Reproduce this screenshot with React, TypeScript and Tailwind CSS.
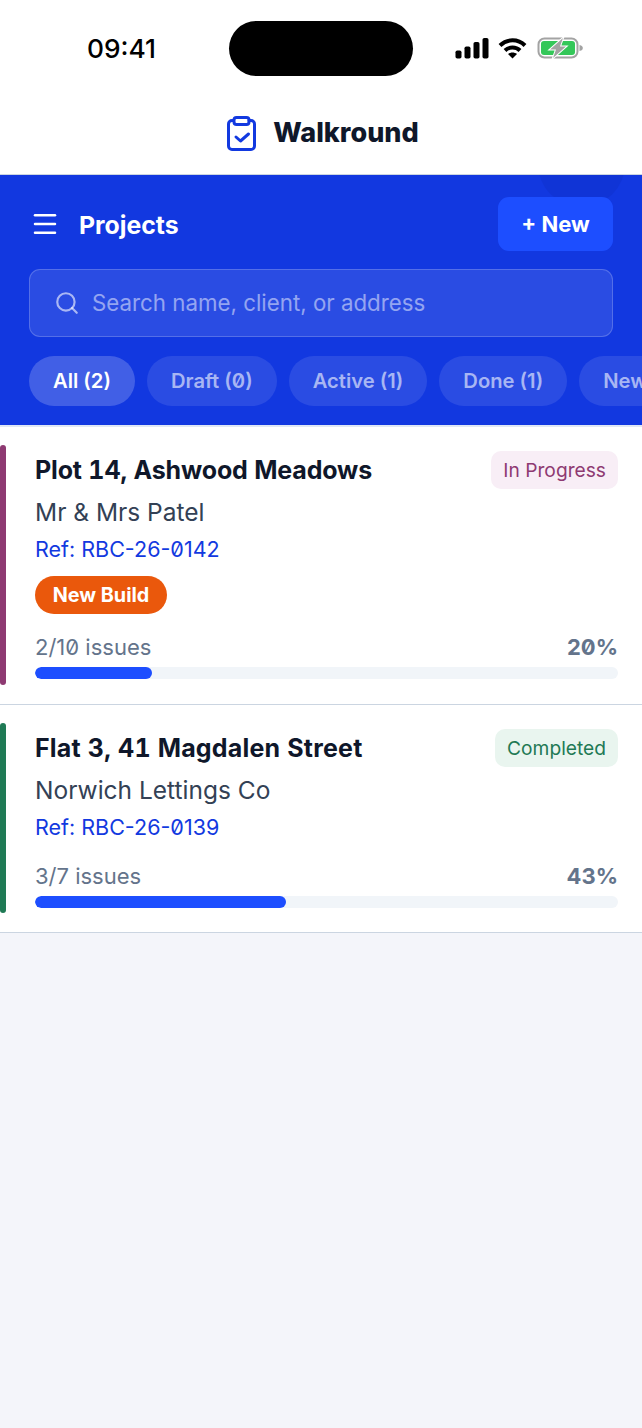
import React from 'react';
import { Search, Menu } from 'lucide-react';

const filters = [
  { label: 'All (2)', active: true },
  { label: 'Draft (0)' },
  { label: 'Active (1)' },
  { label: 'Done (1)' },
  { label: 'New Build (1)' },
];

const projects = [
  {
    name: 'Plot 14, Ashwood Meadows',
    nameClass: 'tracking-[-0.16px]',
    client: 'Mr & Mrs Patel',
    ref: 'Ref: RBC-26-0142',
    status: 'In Progress',
    statusClass: 'bg-[#f8eef6] text-[#8e3a72]',
    barClass: 'bg-[#8e3a72]',
    tag: 'New Build',
    issues: '2/10 issues',
    pct: 20,
  },
  {
    name: 'Flat 3, 41 Magdalen Street',
    nameClass: 'tracking-[0.2px]',
    client: 'Norwich Lettings Co',
    ref: 'Ref: RBC-26-0139',
    status: 'Completed',
    statusClass: 'bg-[#e9f5ef] text-[#1f7a55]',
    barClass: 'bg-[#1f7a55]',
    issues: '3/7 issues',
    pct: 43,
  },
];

function StatusBar() {
  return (
    <div className="relative h-[96px] bg-white">
      <span className="absolute left-[87px] top-[33px] text-[26.3px] leading-[32px] font-medium text-black font-['Inter']">
        09:41
      </span>
      <div className="absolute left-[229px] top-[21px] h-[55px] w-[184px] rounded-[28px] bg-black" />
      <svg className="absolute left-[455px] top-[38px]" width="34" height="21" viewBox="0 0 34 21" fill="#000">
        <rect x="0.5" y="12.5" width="6" height="8" rx="1.8" />
        <rect x="9.5" y="8.5" width="6" height="12" rx="1.8" />
        <rect x="18.5" y="4" width="6" height="16.5" rx="1.8" />
        <rect x="27.5" y="0" width="6" height="20.5" rx="1.8" />
      </svg>
      <svg className="absolute left-[498px] top-[37px]" width="29" height="22" viewBox="0 0 29 22" fill="none" stroke="#000" strokeWidth="4">
        <path d="M2 8.5 C9 1.5 20 1.5 27 8.5" />
        <path d="M7 13.5 C11 9.5 18 9.5 22 13.5" />
        <path d="M14.5 21.5 L10 17 C12.5 15 16.5 15 19 17 Z" fill="#000" stroke="none" />
      </svg>
      <svg className="absolute left-[537px] top-[37px]" width="47" height="22" viewBox="0 0 47 22" fill="none">
        <rect x="1.5" y="1.5" width="39" height="19" rx="6" stroke="#a3a3a3" strokeWidth="2" />
        <rect x="4" y="4" width="34" height="14" rx="3" fill="#34c759" />
        <path d="M42.5 8 C45 8.5 45.8 9.5 45.8 11 C45.8 12.5 45 13.5 42.5 14 Z" fill="#a3a3a3" />
        <path d="M26 1 L13 12.5 H19 L16 21 L29 9.5 H23 Z" fill="#a3a3a3" stroke="#fff" strokeWidth="2" paintOrder="stroke" />
      </svg>
    </div>
  );
}

function BrandHeader() {
  return (
    <div className="flex h-[79px] items-center justify-center gap-[17px] border-b border-[#cbd5e1] bg-white pb-[4px] pl-[4px]">
      <svg width="29" height="35" viewBox="0 0 29 35" fill="none" stroke="#1239e0" strokeWidth="3" strokeLinecap="round" strokeLinejoin="round">
        <path d="M6 4.5 H5 A3.5 3.5 0 0 0 1.5 8 V30 A3.5 3.5 0 0 0 5 33.5 H24 A3.5 3.5 0 0 0 27.5 30 V8 A3.5 3.5 0 0 0 24 4.5 H22" />
        <rect x="7" y="1.5" width="15" height="7" rx="2.5" />
        <path d="M9 21 L13.5 25 L21.5 18" />
      </svg>
      <span className="text-[27px] leading-[34px] font-extrabold text-[#0f172a] font-['Inter']">Walkround</span>
    </div>
  );
}

function ProjectsPanel() {
  return (
    <div className="relative overflow-hidden border-b-2 border-[#dfe7f5] bg-[#1238e0] pt-[22px] pb-[19px] pl-[29px]">
      <div className="absolute left-[538px] top-[-55px] h-[87px] w-[87px] rounded-full bg-[#1034d6]" />
      <div className="relative mr-[29px] flex h-[54px] items-center justify-between">
        <div className="flex items-center gap-[19px] pl-[1px]">
          <Menu size={30} strokeWidth={2} className="text-white" />
          <span className="pt-[1px] text-[24.8px] leading-[32px] font-bold text-white">Projects</span>
        </div>
        <button className="h-[54px] w-[115px] rounded-[11px] bg-[#1d4eff] text-[22px] font-bold text-white">+ New</button>
      </div>
      <div className="relative mt-[18px] mr-[29px] flex h-[68px] items-center gap-[12px] rounded-[11px] border border-white/20 bg-white/10 px-[24px]">
        <Search size={26} strokeWidth={2} className="text-white/60" />
        <span className="text-[22.3px] text-white/50">Search name, client, or address</span>
      </div>
      <div className="relative mt-[19px] flex gap-[12px]">
        {filters.map((f) => (
          <span
            key={f.label}
            className={
              f.active
                ? 'flex h-[50px] shrink-0 items-center rounded-[25px] bg-white/20 px-[24px] text-[20.2px] font-semibold text-white slashed-zero'
                : 'flex h-[50px] shrink-0 items-center rounded-[25px] bg-white/10 px-[24px] text-[20.2px] font-semibold text-white/60 slashed-zero'
            }
          >
            {f.label}
          </span>
        ))}
      </div>
    </div>
  );
}

function ProjectCard({ project }: { project: (typeof projects)[number] }) {
  return (
    <div className="relative border-b border-[#cbd5e1] bg-white pt-[24px] pr-[24px] pb-[25px] pl-[35px] last:pb-[24px] slashed-zero">
      <div className={`absolute left-0 top-[18px] bottom-[19px] w-[6px] rounded-[3px] ${project.barClass}`} />
      <div className="flex items-center justify-between">
        <span className={`text-[25px] leading-[31px] font-bold tabular-nums text-[#0f172a] ${project.nameClass}`}>{project.name}</span>
        <span className={`flex h-[38px] items-center rounded-[10px] px-[12px] text-[19.2px] ${project.statusClass}`}>
          {project.status}
        </span>
      </div>
      <div className="mt-[7px] text-[24.5px] leading-[32px] text-[#334155]">{project.client}</div>
      <div className="mt-[5px] text-[21.5px] leading-[32px] text-[#1239e0]">{project.ref}</div>
      {project.tag && (
        <span className="mt-[11px] mb-[1px] flex h-[38px] w-[132px] items-center justify-center rounded-[19px] bg-[#ea580c] pt-[1px] text-[19.8px] font-bold text-white">
          {project.tag}
        </span>
      )}
      <div className="mt-[17px] flex items-center justify-between">
        <span className="text-[22px] leading-[32px] text-[#64748b]">{project.issues}</span>
        <span className="text-[22px] leading-[32px] font-bold text-[#64748b]">{project.pct}%</span>
      </div>
      <div className="mt-[4px] h-[12px] overflow-hidden rounded-[6px] bg-[#f1f5f9]">
        <div className="h-full rounded-[6px] bg-[#1d4eff]" style={{ width: `${project.pct}%` }} />
      </div>
    </div>
  );
}

export default function App() {
  return (
    <div className="min-h-[1428px] w-[642px] overflow-hidden bg-[#f4f5fa] font-['Inter',sans-serif]">
      <StatusBar />
      <BrandHeader />
      <ProjectsPanel />
      {projects.map((p) => (
        <ProjectCard key={p.ref} project={p} />
      ))}
    </div>
  );
}
